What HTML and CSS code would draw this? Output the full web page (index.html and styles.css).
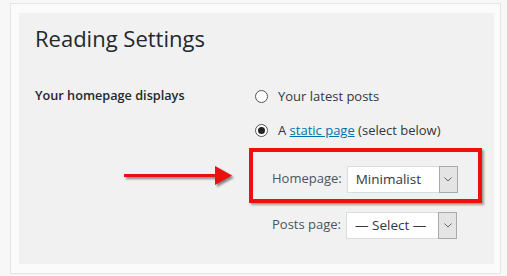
FILE: index.html
```html
<!DOCTYPE html>
<html lang="en">
<head>
    <meta charset="UTF-8">
    <meta name="viewport" content="width=device-width, initial-scale=1.0">
    <title>Reading Settings</title>
    <link rel="stylesheet" href="styles.css">
</head>
<body>
    <div class="frame">
        <div class="panel">
            <h1>Reading Settings</h1>
            <div class="setting">
                <div class="setting-label">Your homepage displays</div>
                <div class="setting-options">
                    <label class="radio-row">
                        <input type="radio" name="show-on-front" value="posts">
                        <span>Your latest posts</span>
                    </label>
                    <label class="radio-row">
                        <input type="radio" name="show-on-front" value="page" checked>
                        <span>A <a href="#">static page</a> (select below)</span>
                    </label>
                    <div class="highlight">
                        <div class="page-row">
                            <span class="page-label">Homepage:</span>
                            <div class="dropdown">
                                <span class="dropdown-value">Minimalist</span>
                                <span class="dropdown-arrow">
                                    <svg width="8" height="5" viewBox="0 0 8 5"><path d="M0.5 0.5 L4 4 L7.5 0.5" fill="none" stroke="#666" stroke-width="1"/></svg>
                                </span>
                            </div>
                        </div>
                    </div>
                    <div class="page-row posts-row">
                        <span class="page-label">Posts page:</span>
                        <div class="dropdown">
                            <span class="dropdown-value">&mdash; Select &mdash;</span>
                            <span class="dropdown-arrow">
                                <svg width="8" height="5" viewBox="0 0 8 5"><path d="M0.5 0.5 L4 4 L7.5 0.5" fill="none" stroke="#666" stroke-width="1"/></svg>
                            </span>
                        </div>
                    </div>
                </div>
            </div>
            <!-- annotation arrow pointing at the homepage select -->
            <svg class="pointer" width="116" height="26" viewBox="0 0 116 26">
                <rect x="0" y="9" width="94" height="3" fill="#e8110f"/>
                <polygon points="91,1 108,10.5 91,20" fill="#e8110f"/>
            </svg>
        </div>
    </div>
</body>
</html>
```

FILE: styles.css
```css
body {
    font-family: 'Open Sans', 'Noto Sans', sans-serif;
    margin: 0;
    padding: 3px 0 0 10px;
    background: #f7f7f7;
    color: #23282d;
    height: 273px;
    overflow: hidden;
}

.frame {
    width: 475px;
    height: 253px;
    padding: 9px 6px 7px 8px;
    border: 1px solid #e4e4e4;
    background: #fbfbfc;
}

.panel {
    position: relative;
    height: 251px;
    box-sizing: border-box;
    padding: 10px 16px 0;
    background: #f1f1f1;
}

h1 {
    margin: 0;
    font-size: 22px;
    font-weight: 400;
    line-height: 30px;
    color: #23282d;
}

.setting {
    display: flex;
    margin-top: 33px;
}

.setting-label {
    flex-shrink: 0;
    width: 220px;
    font-size: 12.7px;
    font-weight: 600;
    line-height: 20px;
    margin-top: -1px;
}

.setting-options {
    display: flex;
    flex-direction: column;
}

.radio-row {
    display: flex;
    align-items: center;
    font-size: 13px;
    line-height: 20px;
    color: #32373c;
    margin-bottom: 14px;
}

.radio-row input {
    appearance: none;
    -webkit-appearance: none;
    width: 13px;
    height: 13px;
    margin: 0 10px 0 0;
    border: 1px solid #555;
    border-radius: 50%;
    background: #fff;
    box-sizing: border-box;
    display: flex;
    align-items: center;
    justify-content: center;
}

.radio-row input:checked::before {
    content: '';
    width: 7px;
    height: 7px;
    border-radius: 50%;
    background: #222;
}

.radio-row a {
    color: #0073aa;
    text-decoration: underline;
}

.highlight {
    margin: -6px 0 0 -6px;
    padding: 14px 20px 6px 19px;
    border: 4px solid #f00f0f;
    box-shadow: 2px 2px 2px rgba(0, 0, 0, 0.35);
    align-self: flex-start;
}

.page-row {
    display: flex;
    align-items: center;
    gap: 5px;
}

.posts-row {
    margin-top: 9px;
    padding-left: 17px;
}

.page-label {
    font-size: 13px;
    color: #4a5560;
    margin-top: -3px;
}

.dropdown {
    display: flex;
    width: 111px;
    height: 27px;
    box-sizing: border-box;
    border: 1px solid #dcdcdc;
    background: #fff;
}

.dropdown-value {
    flex: 1;
    padding-left: 8px;
    font-size: 13.5px;
    line-height: 25px;
    color: #32373c;
    white-space: nowrap;
}

.dropdown-arrow {
    width: 17px;
    margin: -1px -1px -1px 0;
    border: 1px solid #a9a9a9;
    background: #e4e4e4;
    display: flex;
    align-items: center;
    justify-content: center;
}

.pointer {
    position: absolute;
    left: 105px;
    top: 152px;
    filter: drop-shadow(2px 2px 1px rgba(0, 0, 0, 0.45));
}
```
